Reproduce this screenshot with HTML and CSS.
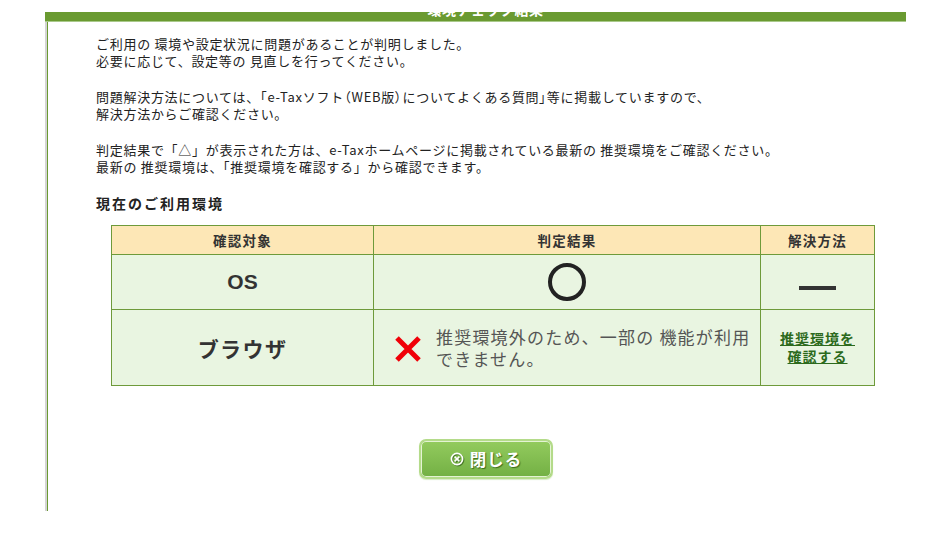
FILE: index.html
```html
<!DOCTYPE html>
<html lang="ja">
<head>
<meta charset="utf-8">
<title>環境チェック結果</title>
<link rel="stylesheet" href="styles.css">
</head>
<body>
<div class="dialog">
  <div class="title-bar"><div class="title-text">環境チェック結果</div></div>
  <div class="panel">
    <div class="content">
      <p class="msg">ご利用の 環境や設定状況に問題があることが判明しました。<br>必要に応じて、設定等の 見直しを行ってください。</p>
      <p class="msg">問題解決方法については、<span class="br">「</span>e-Taxソフト<span class="br">（</span>WEB版<span class="br">）</span>についてよくある質問<span class="br">」</span>等に掲載していますので、<br>解決方法からご確認ください。</p>
      <p class="msg">判定結果で「△」が表示された方は、e-Taxホームページに掲載されている最新の 推奨環境をご確認ください。<br>最新の 推奨環境は、「推奨環境を確認する」から確認できます。</p>
      <h2 class="section-title">現在のご利用環境</h2>
      <table class="env-table">
        <colgroup><col class="c1"><col class="c2"><col class="c3"></colgroup>
        <thead>
          <tr><th>確認対象</th><th>判定結果</th><th>解決方法</th></tr>
        </thead>
        <tbody>
          <tr class="row-os">
            <td class="target">OS</td>
            <td class="center"><span class="ok-ring"></span></td>
            <td class="center"><span class="dash"></span></td>
          </tr>
          <tr class="row-browser">
            <td class="target">ブラウザ</td>
            <td>
              <div class="ng">
                <svg class="ng-x" width="28" height="28" viewBox="0 0 28 28"><path d="M3 3 L25 25 M25 3 L3 25" stroke="#f00008" stroke-width="5" fill="none"/></svg>
                <span class="ng-text">推奨環境外のため、一部の 機能が利用<br>できません。</span>
              </div>
            </td>
            <td class="center"><a class="fix-link" href="#">推奨環境を<br>確認する</a></td>
          </tr>
        </tbody>
      </table>
      <div class="btn-row">
        <button class="close-btn" type="button">
          <svg class="close-icon" width="14" height="14" viewBox="0 0 14 14"><circle cx="7" cy="7" r="5.6" fill="none" stroke="#fff" stroke-width="1.6"/><path d="M4.6 4.6 L9.4 9.4 M9.4 4.6 L4.6 9.4" stroke="#fff" stroke-width="1.5"/></svg>
          <span>閉じる</span>
        </button>
      </div>
    </div>
  </div>
</div>
</body>
</html>
```

FILE: styles.css
```css
html, body {
  margin: 0;
  padding: 0;
  background: #fff;
}
body {
  font-family: "Noto Sans CJK JP", "Noto Sans", sans-serif;
  color: #222;
}
.dialog {
  margin-left: 45px;
  width: 861px;
  padding-top: 12px;
}
.title-bar {
  height: 9px;
  background: #6a9a31;
  overflow: hidden;
  border-bottom: 1px solid #a9c98a;
}
.title-text {
  margin-top: -10px;
  margin-left: 20px;
  line-height: 14px;
  font-size: 14px;
  font-weight: bold;
  color: #fff;
  text-align: center;
  letter-spacing: 0.5px;
}
.panel {
  border-left: 2px solid #d4d4d4;
  height: 489px;
}
.content {
  border-left: 1px solid #6a9a31;
  height: 100%;
  box-sizing: border-box;
  padding: 13px 0 0 48px;
}
.msg {
  margin: 0 0 19px 0;
  font-size: 13px;
  line-height: 17px;
  letter-spacing: 0.72px;
  color: #222;
}
.msg .br {
  font-feature-settings: "palt";
  letter-spacing: 1px;
}
.section-title {
  margin: 1px 0 13px 0;
  font-size: 14px;
  line-height: 18px;
  font-weight: bold;
  letter-spacing: 2px;
  color: #222;
}
.env-table {
  margin-left: 15px;
  width: 763px;
  table-layout: fixed;
  border-collapse: collapse;
}
.env-table .c1 { width: 262px; }
.env-table .c2 { width: 387px; }
.env-table .c3 { width: 114px; }
.env-table th,
.env-table td {
  border: 1px solid #6e9a3a;
  padding: 0;
}
.env-table th {
  background: #fde7b6;
  height: 28px;
  font-size: 13.5px;
  font-weight: bold;
  letter-spacing: 1.3px;
  color: #333;
  text-align: center;
}
.env-table td {
  background: #e9f5e1;
}
.row-os td { height: 54px; }
.row-browser td { height: 75px; }
.target {
  text-align: center;
  font-family: "Liberation Sans", "Noto Sans CJK JP", sans-serif;
  font-weight: bold;
  font-size: 21px;
  color: #333;
}
.row-browser .target {
  font-family: "Noto Sans CJK JP", sans-serif;
  font-size: 21px;
  letter-spacing: 1.4px;
}
.center { text-align: center; }
.ok-ring {
  display: inline-block;
  width: 30px;
  height: 30px;
  border: 4px solid #222;
  border-radius: 50%;
  vertical-align: middle;
}
.dash {
  display: inline-block;
  width: 37px;
  height: 4px;
  background: #333;
  vertical-align: middle;
  margin-top: 6px;
}
.ng {
  display: flex;
  align-items: center;
  padding-left: 20px;
}
.ng-x {
  flex: none;
  margin-top: 2px;
}
.ng-text {
  margin-left: 14px;
  font-size: 17px;
  line-height: 22px;
  letter-spacing: 1.2px;
  color: #555;
}
.fix-link {
  display: inline-block;
  font-size: 14px;
  line-height: 18px;
  font-weight: bold;
  letter-spacing: 1px;
  color: #2c6a1c;
  text-decoration: underline;
}
.btn-row {
  display: flex;
  padding-left: 323px;
  margin-top: 53px;
}
.close-btn {
  display: flex;
  align-items: center;
  justify-content: center;
  gap: 6px;
  width: 134px;
  height: 40px;
  border: 2px solid #b4db8a;
  border-radius: 7px;
  background: linear-gradient(#93cb5e, #73b044);
  box-shadow: inset 0 0 0 1px #e4f3d4, 0 1px 1px #d8ebc6;
  font-family: "Noto Sans CJK JP", sans-serif;
  font-size: 16.5px;
  font-weight: bold;
  letter-spacing: 1px;
  color: #fff;
  text-shadow: 1px 1px 1px #3d6b1d;
  padding: 0 0 0 0;
  cursor: pointer;
}
.close-icon {
  filter: drop-shadow(1px 1px 0 #4a7a2a);
}
```
